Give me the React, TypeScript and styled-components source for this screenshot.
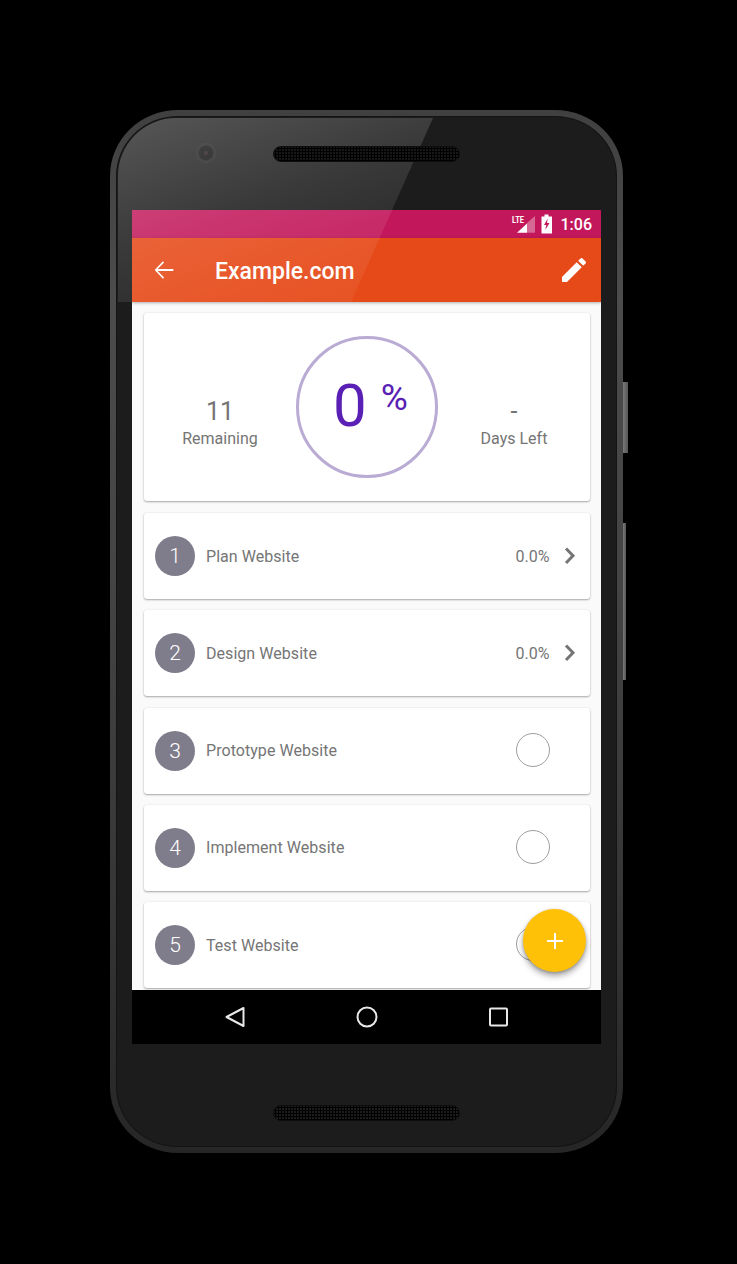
import React from "react";
import styled, { createGlobalStyle } from "styled-components";

const Global = createGlobalStyle`
  html, body { margin: 0; padding: 0; background: #000; }
  body { font-family: Roboto, "Liberation Sans", sans-serif; }
`;

const Stage = styled.div`
  width: 737px;
  height: 1264px;
  background: #000;
  padding: 110px 0 0 110px;
  box-sizing: border-box;
  overflow: hidden;
`;

const Phone = styled.div`
  position: relative;
  width: 513px;
  height: 1043px;
  box-sizing: border-box;
  padding: 7px;
  border-radius: 68px / 66px;
  background: linear-gradient(180deg, #404040 0%, #4c4c4c 18%, #444 45%, #363636 75%, #262626 100%);
  display: flex;
`;

const Bezel = styled.div`
  flex: 1;
  box-sizing: border-box;
  border-radius: 61px / 59px;
  background: #1c1c1c;
  box-shadow: 0 0 0 1px #141414;
  display: flex;
  flex-direction: column;
  align-items: center;
`;

const SideKey = styled.div<{ $top: number; $height: number; $width: number }>`
  position: absolute;
  right: -${(p) => p.$width}px;
  top: ${(p) => p.$top}px;
  width: ${(p) => p.$width}px;
  height: ${(p) => p.$height}px;
  background: linear-gradient(90deg, #7a7a7a, #555);
`;

const Glare = styled.div`
  position: absolute;
  z-index: 3;
  top: 8px;
  left: 8px;
  width: 315px;
  height: 184px;
  border-top-left-radius: 58px;
  pointer-events: none;
  clip-path: polygon(0 0, 100% 0, 74% 100%, 0 100%);
  background: linear-gradient(160deg, rgba(255, 255, 255, 0.26) 0%, rgba(255, 255, 255, 0.13) 45%, rgba(255, 255, 255, 0.08) 70%, rgba(255, 255, 255, 0.04) 100%);
`;

const TopBezel = styled.div`
  width: 469px;
  height: 93px;
  flex: none;
  display: flex;
  align-items: flex-start;
  padding-top: 29px;
  box-sizing: border-box;
`;

const Camera = styled.div`
  width: 20px;
  height: 20px;
  margin: -3px 57px 0 64px;
  border-radius: 50%;
  flex: none;
  background: radial-gradient(circle at 50% 50%, #2a1a1a 0 1.5px, #0d0d0d 2.5px 6.5px, #1f1f1f 8px, #262626 10px);
`;

const Speaker = styled.div`
  position: relative;
  z-index: 4;
  width: 187px;
  height: 16px;
  border-radius: 8px;
  box-sizing: border-box;
  border: 1px solid #0e0e0e;
  background-color: #181818;
  background-image: radial-gradient(circle, #000 0 1px, transparent 1.2px);
  background-size: 3px 3px;
`;

const BottomSpeaker = styled(Speaker)`
  margin-top: 61px;
  background-color: #1c1c1c;
`;

const Screen = styled.div`
  position: relative;
  width: 469px;
  height: 834px;
  flex: none;
  display: flex;
  flex-direction: column;
  overflow: hidden;
  background: #fafafa;
`;

const StatusBar = styled.div`
  height: 28px;
  flex: none;
  background: #c2185b;
  display: flex;
  align-items: center;
  justify-content: flex-end;
  padding-right: 9px;
  gap: 6px;
`;

const Time = styled.span`
  color: #fff;
  font-size: 16px;
  font-weight: 500;
  margin-left: 2px;
  padding-top: 1px;
`;

const Toolbar = styled.div`
  height: 64px;
  flex: none;
  background: #e64a19;
  box-shadow: 0 1px 3px rgba(0, 0, 0, 0.3);
  display: flex;
  align-items: center;
  padding: 0 11px 0 18px;
  position: relative;
  z-index: 1;
`;

const Title = styled.div`
  flex: 1;
  margin: 3px 0 0 37px;
  color: #fff;
  font-size: 23px;
  font-weight: 500;
  line-height: 30px;
`;

const Content = styled.div`
  flex: 1;
  min-height: 0;
  overflow: hidden;
  padding: 11px 11.5px 0 12px;
  display: flex;
  flex-direction: column;
  gap: 11.25px;
`;

const Card = styled.div`
  flex: none;
  background: #fff;
  border-radius: 3px;
  box-shadow: 0 1px 2px rgba(0, 0, 0, 0.32), 0 0 2px rgba(0, 0, 0, 0.08);
`;

const Summary = styled(Card)`
  height: 188px;
  margin-bottom: 0.75px;
  display: grid;
  grid-template-columns: 152px 142px 152px;
  align-items: center;
`;

const Stat = styled.div`
  display: flex;
  flex-direction: column;
  align-items: center;
  color: #757575;
  padding-top: 34px;
`;

const StatValue = styled.div`
  font-size: 25px;
  font-weight: 400;
  line-height: 30px;
`;

const StatLabel = styled.div`
  font-size: 16px;
  line-height: 24px;
`;

const Ring = styled.div`
  width: 142px;
  height: 142px;
  box-sizing: border-box;
  border: 3px solid #b9abd3;
  border-radius: 50%;
  display: flex;
  align-items: flex-start;
  justify-content: center;
  color: #5a1fb4;
  font-weight: 400;
  margin-top: -1px;
`;

const Zero = styled.span`
  font-size: 60px;
  line-height: 70px;
  margin: 32px 14px 0 7px;
`;

const Percent = styled.span`
  font-size: 37px;
  line-height: 40px;
  margin-top: 39px;
`;

const Row = styled(Card)`
  height: 86px;
  display: flex;
  align-items: center;
  padding: 0 11px;
`;

const NumberBadge = styled.div`
  width: 40px;
  height: 40px;
  flex: none;
  border-radius: 50%;
  background: #7f7c8b;
  color: #fff;
  font-size: 21px;
  font-weight: 300;
  display: flex;
  align-items: center;
  justify-content: center;
`;

const RowTitle = styled.div`
  flex: 1;
  margin-left: 11px;
  font-size: 16px;
  color: #757575;
  letter-spacing: 0.05px;
`;

const RowRight = styled.div`
  width: 62px;
  flex: none;
  display: flex;
  align-items: center;
  justify-content: space-between;
  color: #757575;
  font-size: 16px;
  margin-right: 1px;
`;

const Radio = styled.div`
  width: 34px;
  height: 34px;
  box-sizing: border-box;
  border-radius: 50%;
  border: 1px solid #9e9e9e;
  margin-top: -2px;
`;

const Fab = styled.div`
  position: absolute;
  left: 391px;
  top: 699px;
  width: 63px;
  height: 63px;
  border-radius: 50%;
  background: #ffc107;
  box-shadow: 0 4px 6px rgba(0, 0, 0, 0.35), 0 1px 3px rgba(0, 0, 0, 0.2);
  display: flex;
  align-items: center;
  justify-content: center;
`;

const NavBar = styled.div`
  height: 54px;
  flex: none;
  background: #000;
  display: flex;
  gap: 110px;
  align-items: center;
  padding-left: 92px;
  position: relative;
  z-index: 2;
`;

const NavIcon = styled.div`
  display: flex;
`;

const Chevron = () => (
  <svg width="16" height="24" viewBox="0 0 16 24" fill="none" stroke="#757575" strokeWidth="3">
    <path d="M4 4.5 L11 11.7 L4 19" />
  </svg>
);

const steps = [
  { n: 1, name: "Plan Website", pct: "0.0%" },
  { n: 2, name: "Design Website", pct: "0.0%" },
  { n: 3, name: "Prototype Website" },
  { n: 4, name: "Implement Website" },
  { n: 5, name: "Test Website" },
];

export default function App() {
  return (
    <Stage>
      <Global />
      <Phone>
        <SideKey $top={272} $height={71} $width={5} />
        <SideKey $top={413} $height={157} $width={3} />
        <Glare />
        <Bezel>
          <TopBezel>
            <Camera />
            <Speaker />
          </TopBezel>
          <Screen>
            <StatusBar>
              <svg width="24" height="20" viewBox="0 0 24 20">
                <path d="M24 2 V18.7 H16 V9 Z" fill="#fff" opacity="0.35" />
                <path d="M16 9.5 V18.7 H6 Z" fill="#fff" />
                <text x="1" y="9" fontSize="9" fontWeight="700" fill="#fff" fontFamily="Roboto" textLength="12" lengthAdjust="spacingAndGlyphs">LTE</text>
              </svg>
              <svg width="12" height="20" viewBox="0 0 12 20">
                <path d="M3.5 0.5h4v2h3.5v17H0.5v-17h3z" fill="#fff" />
                <path d="M6.8 4.5 3 11h2.3L4.3 16 8.5 9H6z" fill="#c2185b" />
              </svg>
              <Time>1:06</Time>
            </StatusBar>
            <Toolbar>
              <svg width="28" height="28" viewBox="0 0 24 24" fill="#fff">
                <path d="M20 11.2H6.6l5.5-5.6-1-1L4 12l7.1 7.4 1-1-5.5-5.6H20z" />
              </svg>
              <Title>Example.com</Title>
              <svg width="32" height="32" viewBox="0 0 24 24" fill="#fff">
                <path d="M3 17.25V21h3.75L17.81 9.94l-3.75-3.75L3 17.25zM20.71 7.04c.39-.39.39-1.02 0-1.41l-2.34-2.34c-.39-.39-1.02-.39-1.41 0l-1.83 1.83 3.75 3.75 1.83-1.83z" />
              </svg>
            </Toolbar>
            <Content>
              <Summary>
                <Stat>
                  <StatValue>11</StatValue>
                  <StatLabel>Remaining</StatLabel>
                </Stat>
                <Ring>
                  <Zero>0</Zero>
                  <Percent>%</Percent>
                </Ring>
                <Stat>
                  <StatValue>-</StatValue>
                  <StatLabel>Days Left</StatLabel>
                </Stat>
              </Summary>
              {steps.map((s) => (
                <Row key={s.n}>
                  <NumberBadge>{s.n}</NumberBadge>
                  <RowTitle>{s.name}</RowTitle>
                  <RowRight>
                    {s.pct ? (
                      <>
                        <span>{s.pct}</span>
                        <Chevron />
                      </>
                    ) : (
                      <Radio />
                    )}
                  </RowRight>
                </Row>
              ))}
            </Content>
            <Fab>
              <svg width="18" height="18" viewBox="0 0 18 18" stroke="#fff" strokeWidth="2">
                <path d="M9 1v16M1 9h16" />
              </svg>
            </Fab>
            <NavBar>
              <NavIcon>
                <svg width="22" height="24" viewBox="0 0 22 24" fill="none" stroke="#e8e8e8" strokeWidth="2" strokeLinejoin="round">
                  <path d="M19.5 3 V21 L2.5 12 Z" />
                </svg>
              </NavIcon>
              <NavIcon>
                <svg width="22" height="22" viewBox="0 0 22 22" fill="none" stroke="#e8e8e8" strokeWidth="2">
                  <circle cx="11" cy="11" r="9.5" />
                </svg>
              </NavIcon>
              <NavIcon>
                <svg width="21" height="20" viewBox="0 0 21 20" fill="none" stroke="#e8e8e8" strokeWidth="2" strokeLinejoin="round">
                  <rect x="2" y="1.5" width="17" height="17" rx="1" />
                </svg>
              </NavIcon>
            </NavBar>
          </Screen>
          <BottomSpeaker />
        </Bezel>
      </Phone>
    </Stage>
  );
}
